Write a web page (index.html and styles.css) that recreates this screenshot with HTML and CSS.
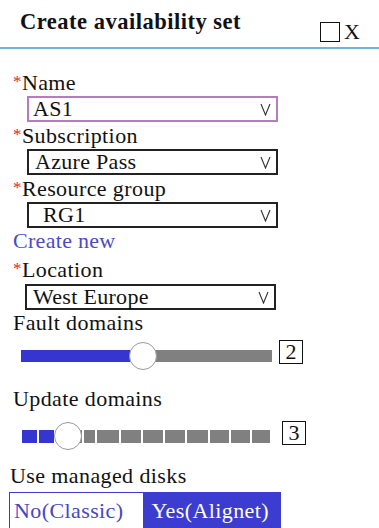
FILE: index.html
```html
<!DOCTYPE html>
<html lang="en">
<head>
  <meta charset="UTF-8" />
  <meta name="viewport" content="width=device-width, initial-scale=1.0" />
  <title>Create availability set</title>
  <link rel="stylesheet" href="styles.css">
</head>
<body>
  <!-- Blade header -->
  <header class="blade-header">
    <h1 class="blade-title">Create availability set</h1>
    <div class="blade-actions">
      <span class="max-box"></span>
      <span class="close-x">X</span>
    </div>
  </header>

  <main class="blade-body">
    <div class="field">
      <label class="label"><span class="req">*</span>Name</label>
      <div class="select select-active">
        <span>AS1</span>
        <svg class="chev" width="11" height="13" viewBox="0 0 11 13"><polyline points="1,1 5.5,12 10,1" fill="none" stroke="#333" stroke-width="1.1"/></svg>
      </div>
    </div>

    <div class="field">
      <label class="label"><span class="req">*</span>Subscription</label>
      <div class="select">
        <span>Azure Pass</span>
        <svg class="chev" width="11" height="13" viewBox="0 0 11 13"><polyline points="1,1 5.5,12 10,1" fill="none" stroke="#333" stroke-width="1.1"/></svg>
      </div>
    </div>

    <div class="field">
      <label class="label"><span class="req">*</span>Resource group</label>
      <div class="select">
        <span class="indent">RG1</span>
        <svg class="chev" width="11" height="13" viewBox="0 0 11 13"><polyline points="1,1 5.5,12 10,1" fill="none" stroke="#333" stroke-width="1.1"/></svg>
      </div>
      <a class="link" href="#">Create new</a>
    </div>

    <div class="field">
      <label class="label label-tall"><span class="req">*</span>Location</label>
      <div class="select select-left">
        <span>West Europe</span>
        <svg class="chev" width="11" height="13" viewBox="0 0 11 13"><polyline points="1,1 5.5,12 10,1" fill="none" stroke="#333" stroke-width="1.1"/></svg>
      </div>
    </div>

    <!-- Fault domains slider -->
    <div class="field">
      <label class="label">Fault domains</label>
      <div class="slider-row">
        <div class="track">
          <div class="track-fill"></div>
          <div class="track-rest"></div>
          <span class="thumb thumb-fault"></span>
        </div>
        <span class="value-box">2</span>
      </div>
    </div>

    <!-- Update domains slider -->
    <div class="field">
      <label class="label">Update domains</label>
      <div class="slider-row slider-row-update">
        <div class="segments">
          <span class="seg on" style="width:15px"></span>
          <span class="seg on" style="width:15px"></span>
          <span class="seg" style="width:26px"></span>
          <span class="seg" style="width:11px"></span>
          <span class="seg" style="width:22px"></span>
          <span class="seg" style="width:20px"></span>
          <span class="seg" style="width:20px"></span>
          <span class="seg" style="width:20px"></span>
          <span class="seg" style="width:21px"></span>
          <span class="seg" style="width:19px"></span>
          <span class="seg" style="width:19px"></span>
          <span class="seg" style="width:18px"></span>
          <span class="thumb thumb-update"></span>
        </div>
        <span class="value-box">3</span>
      </div>
    </div>

    <div class="field">
      <label class="label label-disks">Use managed disks</label>
      <div class="toggle">
        <span class="toggle-opt">No(Classic)</span>
        <span class="toggle-opt selected">Yes(Alignet)</span>
      </div>
    </div>
  </main>
</body>
</html>
```

FILE: styles.css
```css
/* Base */
*, *::before, *::after {
  box-sizing: border-box;
  margin: 0;
  padding: 0;
}
body {
  font-family: "Liberation Serif", "DejaVu Serif", serif;
  background: #fff;
  color: #111;
  font-size: 22px;
  width: 379px;
  overflow: hidden;
}
a { text-decoration: none; color: inherit; }

/* Header */
.blade-header {
  display: flex;
  align-items: flex-start;
  justify-content: space-between;
  height: 49px;
  border-bottom: 2px solid #6db5d5;
  padding: 9px 19px 0 20px;
}
.blade-title {
  font-size: 22.5px;
  font-weight: 700;
  letter-spacing: 0.5px;
  line-height: 26px;
}
.blade-actions {
  display: flex;
  align-items: center;
  gap: 4px;
  margin-top: 12px;
}
.max-box {
  width: 20px;
  height: 20px;
  border: 1.5px solid #111;
}
.close-x {
  font-size: 22px;
  line-height: 22px;
}

/* Form body */
.blade-body {
  padding: 20px 0 0 13px;
}
.field {
  display: flex;
  flex-direction: column;
}
.label {
  line-height: 26px;
  letter-spacing: 0.4px;
}
.label-tall { line-height: 29px; }
.req {
  color: #e02828;
  font-size: 17px;
  vertical-align: 3px;
}
.select {
  display: flex;
  align-items: center;
  justify-content: space-between;
  width: 251px;
  height: 26px;
  margin-left: 14px;
  border: 2px solid #222;
  padding: 0 5px 0 6px;
  line-height: 22px;
  letter-spacing: 0.3px;
}
.select-active {
  border-color: #b77bc0;
  padding-left: 4px;
}
.select-left { margin-left: 12px; }
.indent { padding-left: 8px; }
.chev { flex-shrink: 0; }
.link {
  color: #4b4bc6;
  line-height: 26px;
  letter-spacing: 0.3px;
}

/* Sliders */
.slider-row {
  display: flex;
  align-items: center;
  gap: 7px;
  height: 40px;
  margin-left: 8px;
  margin-bottom: 10px;
}
.track {
  position: relative;
  display: flex;
  width: 251px;
  height: 12px;
}
.track-fill {
  width: 109px;
  background: #3535cf;
}
.track-rest {
  flex: 1;
  background: #808080;
}
.thumb {
  position: absolute;
  width: 28px;
  height: 28px;
  border-radius: 50%;
  background: #fff;
  border: 1.5px solid #999;
}
.thumb-fault { left: 108px; top: -8px; }
.value-box {
  display: flex;
  align-items: center;
  justify-content: center;
  width: 24px;
  height: 24px;
  margin-bottom: 8px;
  border: 1.5px solid #111;
  font-size: 22px;
  line-height: 22px;
}
.slider-row-update {
  margin-left: 9px;
  margin-top: 4px;
  gap: 10px;
  margin-bottom: 7px;
}
.slider-row-update .value-box { margin-bottom: 6px; }
.segments {
  position: relative;
  display: flex;
  gap: 2px;
  width: 250px;
  height: 13px;
}
.seg {
  height: 13px;
  background: #808080;
}
.seg.on { background: #3535cf; }
.thumb-update { left: 32px; top: -8px; }

/* Managed disks toggle */
.label-disks { margin-left: -3px; }
.toggle {
  display: flex;
  width: 272px;
  height: 38px;
  margin-left: -4px;
  margin-top: 3px;
  border: 1.5px solid #3c3cd0;
}
.toggle-opt {
  flex: 1;
  display: flex;
  align-items: center;
  padding-left: 4px;
  color: #4646c4;
  letter-spacing: 0.4px;
}
.toggle-opt.selected {
  background: #3c3cd0;
  color: #fff;
  padding-left: 9px;
}
```
